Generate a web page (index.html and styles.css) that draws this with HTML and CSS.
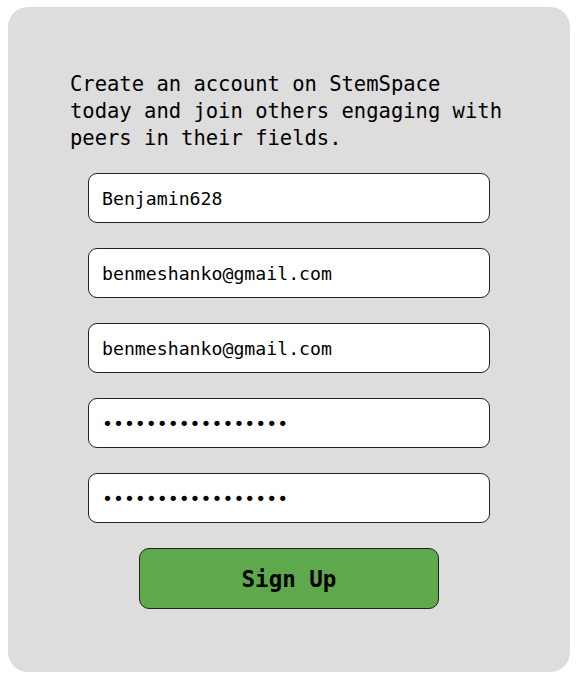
FILE: index.html
```html
<!DOCTYPE html>
<html>
<head>
<meta charset="utf-8">
<link rel="stylesheet" href="styles.css">
</head>
<body>
<div class="card">
  <p class="intro">Create an account on StemSpace today and join others engaging with peers in their fields.</p>
  <form class="form">
    <input class="field" type="text" value="Benjamin628">
    <input class="field" type="email" value="benmeshanko@gmail.com">
    <input class="field" type="email" value="benmeshanko@gmail.com">
    <input class="field" type="password" value="abcdefghijklmnopq">
    <input class="field" type="password" value="abcdefghijklmnopq">
    <button class="signup" type="button">Sign Up</button>
  </form>
</div>
</body>
</html>
```

FILE: styles.css
```css
html, body {
  margin: 0;
  padding: 0;
  background: #ffffff;
}
.card {
  margin: 7px 0 0 8px;
  width: 562px;
  height: 665px;
  box-sizing: border-box;
  background: #dddddd;
  border-radius: 20px;
  padding-top: 64px;
  display: flex;
  flex-direction: column;
  align-items: center;
}
.intro {
  margin: 0;
  width: 438px;
  font-family: "DejaVu Sans Mono", monospace;
  font-size: 20.5px;
  line-height: 27px;
  color: #000;
}
.form {
  margin-top: 21px;
  display: flex;
  flex-direction: column;
  align-items: center;
  gap: 25px;
}
.field {
  box-sizing: border-box;
  width: 402px;
  height: 50px;
  margin: 0;
  padding: 0 13px;
  border: 1px solid #222;
  border-radius: 9px;
  background: #fff;
  font-family: "DejaVu Sans Mono", monospace;
  font-size: 18.2px;
  color: #000;
  outline: none;
}
.signup {
  box-sizing: border-box;
  width: 300px;
  height: 61px;
  margin: 0;
  border: 1px solid #222;
  border-radius: 10px;
  background: #5ea94b;
  font-family: "DejaVu Sans Mono", monospace;
  font-weight: bold;
  font-size: 22.5px;
  color: #000;
}
```
